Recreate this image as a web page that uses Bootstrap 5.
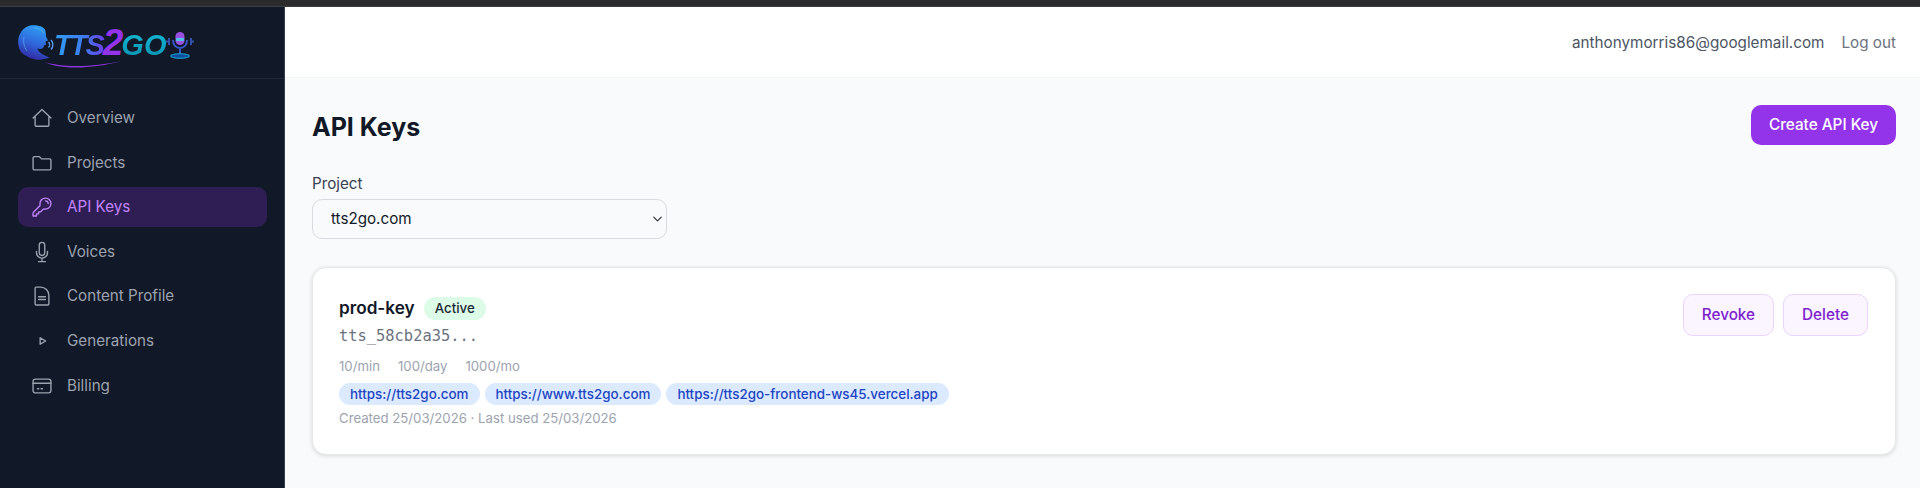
<!doctype html>
<html lang="en"><head><meta charset="utf-8"><title>API Keys</title>
<link rel="stylesheet" href="https://cdn.jsdelivr.net/npm/bootstrap@5.3.0/dist/css/bootstrap.min.css">
<style>
html,body{height:488px;overflow:hidden}
body{font-family:Inter,"Liberation Sans",sans-serif;background:#f9fafb;color:#111827}
.topstrip{height:7px;background:#2b2b2b;border-bottom:1px solid #3a3f47}
.shell{height:481px}
.side{width:285px;background:#111827;border-right:1px solid #374151}
.brand{height:72px;border-bottom:1px solid #1f2937;padding:0 0 0 18px}
.logo-word{font-family:"Liberation Sans",sans-serif;font-weight:700;font-style:italic;font-size:29px;line-height:1;margin-left:-1px;white-space:nowrap}
.w-a{letter-spacing:-2px;padding-right:2px;background:linear-gradient(90deg,#2f9df4,#3d7ff0 55%,#6a3fe6);-webkit-background-clip:text;background-clip:text;color:transparent}
.w-b{color:#9333ea;font-size:37px;letter-spacing:-2px;margin-left:-2px}
.w-c{background:linear-gradient(180deg,#11bcd6,#0b8fb0);-webkit-background-clip:text;background-clip:text;color:transparent}
.logo-swoosh{position:absolute;left:-10px;bottom:-8px}
.logo-mic{margin-top:4px}
.side-nav{padding:19px 17px 0 18px;gap:4.6px}
.side-link{height:40px;padding:1px 13px 0;gap:14px;border-radius:10px;color:#9ca3af;font-size:15.2px;font-weight:400;text-decoration:none}
.side-link svg{width:22px;height:22px;flex:none;fill:none;stroke:currentColor;stroke-width:1.5;stroke-linecap:round;stroke-linejoin:round;margin-top:-1px}
.side-link.is-on{background:rgba(147,51,234,.23);color:#c084fc}
.topline{height:71px;background:#fff;border-bottom:1px solid #f3f4f6;padding:2px 24px 0 27px;gap:17px;font-size:15.25px;color:#4b5563}
.topline a{color:#6b7280;text-decoration:none}
.work{padding:27px 24px 0 27px}
.page-ttl{font-size:25px;font-weight:700;margin:0;padding-top:3px;color:#111827}
.btn-make{background:#9333ea;color:#fff;border:0;border-radius:10px;height:40px;width:145px;font-size:15.3px;font-weight:500;padding:0}
.btn-make:hover{background:#9333ea;color:#fff}
.prj-wrap{margin-top:29px}
.fld-label{font-size:15.2px;font-weight:400;color:#374151;margin:0 0 5px;line-height:20px;display:block}
.fld-sel{width:355px;height:40px;border:1px solid #d8dbe0;border-radius:10px;font-size:15.2px;color:#111827;background-color:#f9fafb;padding:0 18px;background-size:13px 10px;background-position:right 2.500px center}
.key-box{margin-top:28px;height:188px;background:#fff;border:1px solid #e5e7eb;border-radius:14px;box-shadow:0 1px 4px rgba(0,0,0,.14);padding:28px 27px 0 26px}
.key-name{font-size:17.2px;font-weight:600;line-height:24px;color:#111827}
.pill-ok{background:#dcfce7;color:#1f2937;font-size:13.3px;font-weight:500;border-radius:12px;height:23px;line-height:23px;padding:0 11px;margin-left:9px}
.key-mono{font-family:"DejaVu Sans Mono","Liberation Mono",monospace;font-size:15.4px;line-height:20px;color:#6b7280;margin-top:6px}
.lim{font-size:13.2px;color:#9ca3af;gap:18px;line-height:18px;margin-top:11px}
.chips{gap:5px;margin-top:8px}
.chip-o{background:#dbeafe;color:#2144c4;font-size:13.4px;font-weight:500;line-height:22px;height:22px;border-radius:11px;padding:0 11px}
.stamp{font-size:13.2px;color:#9ca3af;line-height:18px;margin-top:4px}
.btn-soft{background:#faf5ff;border:1px solid #e9d5ff;color:#7e22ce;border-radius:10px;height:42px;font-size:15.3px;font-weight:500;padding:0 18px}
.btn-soft:hover{background:#faf5ff;color:#7e22ce;border-color:#e9d5ff}
.soft-row{gap:9px;margin-top:-2px}
</style></head>
<body>
<div class="topstrip"></div>
<div class="shell d-flex">
<aside class="side d-flex flex-column flex-shrink-0">
 <div class="brand d-flex align-items-center">
  <svg width="37" height="36" viewBox="0 0 37 36" class="flex-shrink-0"><defs><linearGradient id="hd" x1="0.6" y1="0" x2="0.3" y2="1"><stop offset="0" stop-color="#2fa0f5"/><stop offset=".55" stop-color="#2f62d8"/><stop offset="1" stop-color="#33249c"/></linearGradient></defs>
   <path d="M12 .5c6-1 13 .5 15 4 1 3 1 5 1 7l2 4-2.500 1 .5 3-2 1c0 3-3 4-6.500 3 1 4 5 6 12 9-7 3-17 3-22-1C2 29-1 21 .5 13 2 7 6 2 12 .5z" fill="url(#hd)"/>
   <path d="M16 3c4 0 8 2 10 5M6 12c-1 5 0 10 3 14" stroke="#5cc0f5" stroke-width="1" fill="none" opacity=".6"/>
   <path d="M30.500 17c1.500 1.500 1.500 4 0 5.500M33 15c2.500 2.500 2.500 7 0 9.500" stroke="#5b9cf0" stroke-width="1.400" fill="none"/></svg>
  <span class="logo-word position-relative"><span class="w-a">TTS</span><span class="w-b">2</span><span class="w-c">GO</span>
   <svg class="logo-swoosh" width="90" height="8" viewBox="0 0 90 8"><path d="M0 1c18 5 45 6 78-1-30 8-60 9-78 1z" fill="#8a35e0"/></svg></span>
  <svg width="28" height="30" viewBox="0 0 28 30" class="logo-mic flex-shrink-0"><rect x="9.500" y="2" width="9" height="13" rx="4.500" fill="#9a4fe0"/><rect x="10" y="8" width="8" height="3" fill="#4fc0e8"/><path d="M7 10c0 5 3 8 7 8s7-3 7-8M14 18v6" stroke="#3557c9" stroke-width="2" fill="none"/><ellipse cx="14" cy="26" rx="9.500" ry="2.300" fill="#0f4fa0" stroke="#18a7d6"/><path d="M3 8v7M1 10.500v2M25 8v7M27 10.500v2" stroke="#3b66d6" stroke-width="1.500"/></svg>
 </div>
 <nav class="side-nav d-flex flex-column">
  <a class="side-link d-flex align-items-center" href="#"><svg viewBox="0 0 24 24"><path d="M2.250 12 12 2.750 21.750 12M4.500 9.750V20a1 1 0 0 0 1 1h13a1 1 0 0 0 1-1V9.750"/></svg>Overview</a>
  <a class="side-link d-flex align-items-center" href="#"><svg viewBox="0 0 24 24"><path d="M2.250 6.500A1.500 1.500 0 0 1 3.750 5H9l2.500 2.500h8.750a1.500 1.500 0 0 1 1.500 1.500v9a1.500 1.500 0 0 1-1.500 1.500H3.750a1.500 1.500 0 0 1-1.500-1.500z"/></svg>Projects</a>
  <a class="side-link is-on d-flex align-items-center" href="#"><svg viewBox="0 0 24 24"><path d="M15.750 5.250a3 3 0 0 1 3 3m3 0a6 6 0 0 1-7.029 5.912c-.563-.097-1.159.026-1.563.43L10.500 17.250H8.250v2.250H6v2.250H2.250v-2.818c0-.597.237-1.170.659-1.591l6.499-6.499c.404-.404.527-1 .43-1.563A6 6 0 1 1 21.750 8.250z"/></svg>API Keys</a>
  <a class="side-link d-flex align-items-center" href="#"><svg viewBox="0 0 24 24"><path d="M12 18.750a6 6 0 0 0 6-6v-1.500m-6 7.500a6 6 0 0 1-6-6v-1.500m6 7.500v3.750m-3.750 0h7.500M12 15.750a3 3 0 0 1-3-3V4.500a3 3 0 1 1 6 0v8.250a3 3 0 0 1-3 3z"/></svg>Voices</a>
  <a class="side-link d-flex align-items-center" href="#"><svg viewBox="0 0 24 24"><path d="M10.500 2.250H5.625c-.621 0-1.125.504-1.125 1.125v17.250c0 .621.504 1.125 1.125 1.125h12.750c.621 0 1.125-.504 1.125-1.125V11.250a9 9 0 0 0-9-9zM8.250 12.750h7.500M8.250 15.750h7.500"/></svg>Content Profile</a>
  <a class="side-link d-flex align-items-center" href="#"><svg viewBox="0 0 24 24"><path d="M10 8.500 16 12l-6 3.500z"/></svg>Generations</a>
  <a class="side-link d-flex align-items-center" href="#"><svg viewBox="0 0 24 24"><rect x="2.250" y="4.500" width="19.500" height="15" rx="2.500"/><path d="M2.250 9h19.500M7 15h1.500M11 15h1.500"/></svg>Billing</a>
 </nav>
</aside>
<div class="flex-grow-1 d-flex flex-column min-w-0">
 <header class="topline d-flex align-items-center justify-content-end"><span>anthonymorris86@googlemail.com</span><a href="#">Log out</a></header>
 <main class="work">
  <div class="d-flex justify-content-between align-items-center"><h1 class="page-ttl">API Keys</h1><button class="btn btn-make">Create API Key</button></div>
  <div class="prj-wrap"><label class="fld-label" for="prj">Project</label><select id="prj" class="form-select fld-sel"><option>tts2go.com</option></select></div>
  <section class="key-box d-flex justify-content-between align-items-start">
   <div>
    <div class="d-flex align-items-center"><span class="key-name">prod-key</span><span class="pill-ok">Active</span></div>
    <div class="key-mono">tts_58cb2a35...</div>
    <div class="lim d-flex"><span>10/min</span><span>100/day</span><span>1000/mo</span></div>
    <div class="chips d-flex"><span class="chip-o">https://tts2go.com</span><span class="chip-o">https://www.tts2go.com</span><span class="chip-o">https://tts2go-frontend-ws45.vercel.app</span></div>
    <div class="stamp">Created 25/03/2026 · Last used 25/03/2026</div>
   </div>
   <div class="soft-row d-flex"><button class="btn btn-soft">Revoke</button><button class="btn btn-soft">Delete</button></div>
  </section>
 </main>
</div>
</div>
</body></html>
